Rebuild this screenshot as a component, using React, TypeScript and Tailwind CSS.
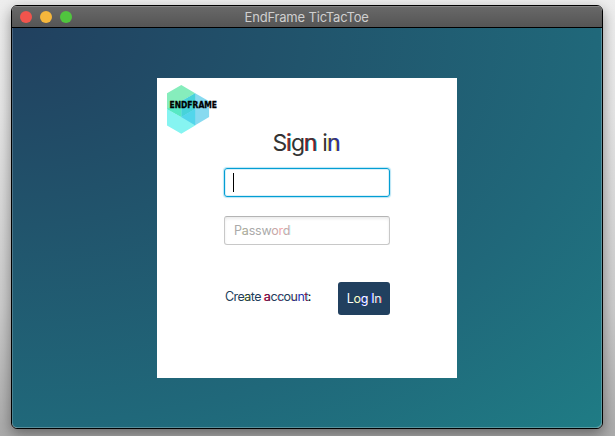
import React from "react";

function Logo() {
  return (
    <svg width="52" height="50" viewBox="0 0 52 50" className="block overflow-visible">
      <polygon points="14.3,0 28.2,8.2 14.3,16.3 14.3,32 0,24 0,8.2" fill="#86edbc" />
      <polygon points="0,24 14.3,32 28.2,24 28.2,40.5 14.3,48.7 0,40.5" fill="#86f4f1" />
      <polygon points="28.2,8.2 42.1,16.3 42.1,32 28.2,40.2 14.3,32 14.3,16.3" fill="#87daf0" />
      <polygon points="14.3,16.3 28.2,8.2 28.2,24 14.3,32" fill="#47d3da" />
      <polygon points="14.3,32 28.2,24 28.2,40.2" fill="#52d6eb" />
      <polygon points="0,24 14.3,16.3 14.3,32" fill="#57e8c4" />
      <text
        x="2.5"
        y="23"
        textLength="47.5"
        lengthAdjust="spacingAndGlyphs"
        stroke="#000"
        strokeWidth="0.3"
        className="fill-black font-['DejaVu_Sans',sans-serif] text-[8.2px] font-bold"
      >
        ENDFRAME
      </text>
    </svg>
  );
}

export default function App() {
  return (
    <div className="h-[436px] w-[615px] overflow-hidden bg-[linear-gradient(180deg,#eeeeee_0%,#e6e6e6_25%,#cccccc_70%,#aaaaaa_100%)] pt-[5px] pl-[11px] font-[Inter,sans-serif]">
      <div className="flex h-[424px] w-[592px] flex-col overflow-hidden rounded-[6px] border border-black shadow-[0_5px_14px_rgba(0,0,0,0.4)]">
        <header className="grid h-[22px] shrink-0 grid-cols-[1fr_auto_1fr] items-center border-b border-black bg-linear-to-b from-[#696969] to-[#555555] px-2 shadow-[inset_0_1px_0_#858585]">
          <div className="flex gap-2">
            <span className="size-3 rounded-full bg-[#f1544d]" />
            <span className="size-3 rounded-full bg-[#f6b73c]" />
            <span className="size-3 rounded-full bg-[#50c53e]" />
          </div>
          <h1 className="w-[125px] pt-px text-[13px] leading-[20px] tracking-[-0.18px] whitespace-nowrap text-[#cfcfcf]">
            EndFrame TicTacToe
          </h1>
        </header>
        <main className="flex flex-1 items-start justify-center rounded-b-[5px] bg-[radial-gradient(ellipse_farthest-corner_at_0_0,#21405f_0%,#21546c_35%,#20687a_70%,#1f7c85_100%)] pt-[50px] shadow-[inset_1px_0_0_#ffffff30,inset_-1px_-1px_0_#ffffff40]">
          <form className="flex h-[300px] w-[300px] flex-col bg-white">
            <div className="h-[51px] pt-[7px] pl-[10px]">
              <Logo />
            </div>
            <h2 className="ml-[115.5px] h-[39px] text-[23px] leading-[28px] tracking-[-0.95px] whitespace-nowrap text-[#333333]">
              S<span className="text-[#553338] [text-shadow:-0.5px_0_#ff3030,0.5px_0_#00dede]">i</span>g
              <span className="text-[#443338] [text-shadow:-0.5px_0_#ff3030,0.5px_0_#00dede]">n</span>{" "}
              i<span className="text-[#333380] [text-shadow:-0.6px_0_#e8e800,0.4px_0_#3030ff]">n</span>
            </h2>
            <div className="ml-[67px] flex h-[29px] w-[166px] items-center rounded-[3px] border border-[#039ed3] pl-2 shadow-[0_0_1px_1px_#b9e5f5,inset_0_0_0_1px_#d8f0f9]">
              <span className="h-[19px] w-px bg-black" />
            </div>
            <div className="mt-[19px] ml-[67px] flex h-[29px] w-[166px] items-center rounded-[3px] border border-[#c8c8c8] border-t-[#b4b4b4] pl-[9px] text-[12.5px] tracking-[-0.2px] text-[#aaaaaa] shadow-[inset_0_2px_3px_#ececec]">
              <span className="h-[18px] leading-[17px]">
                P<span className="[text-shadow:-0.4px_0.2px_#f1f1a0]">a</span>ssw
                <span className="text-[#c8a8a8]">o</span>
                <span className="text-[#f0a8a8]">r</span>
                <span className="text-[#d0a8a8] [text-shadow:0.5px_0_#aaffff]">d</span>
              </span>
            </div>
            <div className="mt-[37px] ml-[68px] flex w-[165px] justify-between">
              <span className="mt-[6px] h-[18px] text-[12.5px] leading-[18px] tracking-[-0.56px] whitespace-nowrap text-[#203d5b]">
                Cre<span className="[text-shadow:-0.4px_0_#eeee00]">a</span>te{" "}
                <span className="text-[#602050] [text-shadow:-0.4px_0_#ff2050]">a</span>c
                <span className="text-[#703060] [text-shadow:0.4px_0_#00e0e0]">c</span>o
                <span className="text-[#303098] [text-shadow:-0.4px_0_#eeee00]">u</span>
                <span className="text-[#2030b0]">n</span>
                <span className="text-[#802050] [text-shadow:0.5px_0_#00e0e0]">t</span>
                <span className="text-black">:</span>
              </span>
              <button
                type="button"
                className="h-[33px] w-[52px] rounded-[3px] bg-[#21405f] text-[12.5px] leading-[33px] tracking-[-0.35px] whitespace-nowrap text-white"
              >
                L<span className="text-[#ffffc8]">o</span>
                <span className="[text-shadow:-0.5px_0.3px_#2020ff]">g</span>{" "}
                <span className="[text-shadow:-0.7px_0_#2020ff]">I</span>
                <span className="text-[#c8ffff] [text-shadow:0.5px_0_#ff2050]">n</span>
              </button>
            </div>
          </form>
        </main>
      </div>
    </div>
  );
}
